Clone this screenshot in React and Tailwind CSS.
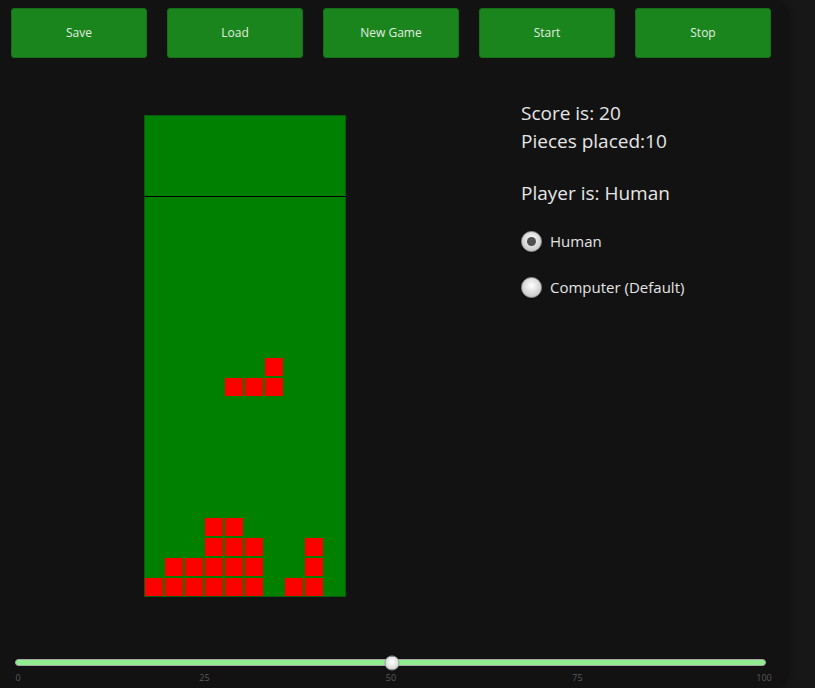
import React, { useState } from 'react';

const BUTTONS = ['Save', 'Load', 'New Game', 'Start', 'Stop'];

// settled cells on the 10x20 board, as [row, col]
const SETTLED = [
    [16, 3], [16, 4],
    [17, 3], [17, 4], [17, 5], [17, 8],
    [18, 1], [18, 2], [18, 3], [18, 4], [18, 5], [18, 8],
    [19, 0], [19, 1], [19, 2], [19, 3], [19, 4], [19, 5], [19, 7], [19, 8],
];

// the falling piece
const FALLING = [[8, 6], [9, 4], [9, 5], [9, 6]];

const Board = () => {
    const filled = new Set([...SETTLED, ...FALLING].map(([r, c]) => `${r}-${c}`));
    const cells = [];
    for (let r = 0; r < 20; r++) {
        for (let c = 0; c < 10; c++) {
            cells.push(
                <div key={`${r}-${c}`} className="w-[20px] h-[20px]">
                    {filled.has(`${r}-${c}`) && <div className="m-px w-[18px] h-[18px] bg-[#ff0000]" />}
                </div>
            );
        }
    }

    return (
        <div className="w-[202px] bg-[#008000] shadow-[inset_0_0_0_1px_#0b5a0b]">
            <div className="h-[81px]" />
            <div className="h-px bg-black" />
            <div className="grid grid-cols-[repeat(10,20px)] w-[200px]">{cells}</div>
        </div>
    );
};

const Radio = ({ label, checked, onClick }) => (
    <button onClick={onClick} className="flex items-center gap-[8px] h-[22px]">
        <span className="w-[21px] h-[21px] rounded-full border border-[#9a9a9a] bg-[radial-gradient(circle_at_50%_40%,#ffffff,#d4d4d4_60%,#b8b8b8)] flex items-center justify-center shadow-[0_1px_1px_rgba(0,0,0,0.5)]">
            {checked && <span className="w-[9px] h-[9px] rounded-full bg-[#505050]" />}
        </span>
        <span className="text-[15px] text-[#e4e4e4]">{label}</span>
    </button>
);

export default function App() {
    const [player, setPlayer] = useState('Human');
    const [speed] = useState(50);

    return (
        <div className="flex h-[688px] w-[815px] bg-[#171717] overflow-hidden" style={{ fontFamily: '"Open Sans", "Noto Sans", sans-serif' }}>
            <div className="w-[788px] h-full bg-[#121212] rounded-r-[18px] shadow-[2px_0_6px_rgba(0,0,0,0.35)] flex flex-col">
                {/* toolbar */}
                <div className="flex gap-[20px] pl-[11px] pt-[8px]">
                    {BUTTONS.map((b) => (
                        <button
                            key={b}
                            className="w-[136px] h-[50px] rounded-[3px] bg-[#1a851c] border border-[#177017] text-[12px] text-[#e2eee2]"
                        >
                            {b}
                        </button>
                    ))}
                </div>

                {/* board + info */}
                <div className="flex items-start mt-[40px]">
                    <div className="ml-[144px] mt-[17px]">
                        <Board />
                    </div>
                    <div className="ml-[175px] text-[#e6e6e6]">
                        <div className="text-[19px] leading-[28px] pt-[1px]">Score is: 20</div>
                        <div className="text-[19px] leading-[28px]">Pieces placed:10</div>
                        <div className="text-[19px] leading-[28px] mt-[24px]">Player is: {player}</div>
                        <div className="flex flex-col gap-[24px] mt-[23px]">
                            <Radio label="Human" checked={player === 'Human'} onClick={() => setPlayer('Human')} />
                            <Radio label="Computer (Default)" checked={player === 'Computer'} onClick={() => setPlayer('Computer')} />
                        </div>
                    </div>
                </div>

                {/* speed slider */}
                <div className="mt-[62px] pl-[15px]">
                    <div className="relative w-[751px] h-[7px] rounded-full bg-[#90ee90] border border-[#a8a8a8]">
                        <div
                            className="absolute top-1/2 w-[15px] h-[15px] -translate-x-1/2 -translate-y-1/2 rounded-full bg-[radial-gradient(circle_at_50%_40%,#ffffff,#dcdcdc_65%,#bcbcbc)] border border-[#9a9a9a]"
                            style={{ left: `${3 + (speed / 100) * 746}px` }}
                        />
                    </div>
                </div>
                <div className="flex justify-between w-[766px] ml-[8px] mt-[5px] text-[9px] text-[#5a5a5a]">
                    {['0', '25', '50', '75', '100'].map((t) => (
                        <span key={t} className="w-[20px] text-center">{t}</span>
                    ))}
                </div>
            </div>
        </div>
    );
}
